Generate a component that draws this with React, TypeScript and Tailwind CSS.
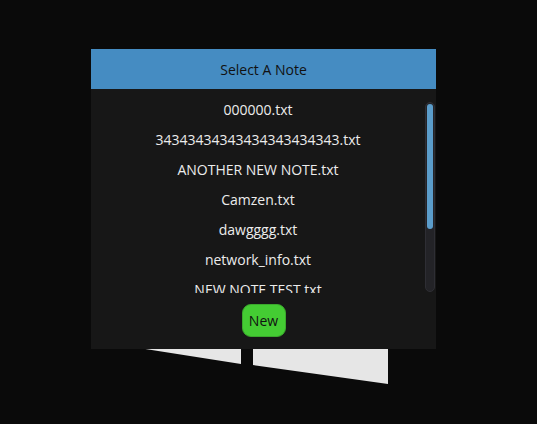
const notes = [
  "000000.txt",
  "34343434343434343434343.txt",
  "ANOTHER NEW NOTE.txt",
  "Camzen.txt",
  "dawgggg.txt",
  "network_info.txt",
  "NEW NOTE TEST.txt",
];

export default function App() {
  return (
    <div
      className="relative h-[424px] w-[537px] overflow-hidden bg-[#0a0a0a]"
      style={{ fontFamily: '"Open Sans", "Noto Sans", sans-serif' }}
    >
      {/* shapes behind the dialog */}
      <svg className="absolute left-0 top-0" width="537" height="424">
        <polygon points="139,348 241,348 241,364" fill="#e6e6e6" />
        <polygon points="253,348 388,348 388,384 253,365" fill="#e6e6e6" />
      </svg>

      <div className="absolute left-[91px] top-[49px] flex h-[300px] w-[345px] flex-col bg-[#171717]">
        {/* Header */}
        <div className="flex h-[40px] items-center justify-center bg-[#458cc2] text-[14px] text-[#111]">
          Select A Note
        </div>

        {/* List + scrollbar */}
        <div className="flex h-[204px] overflow-hidden">
          <div className="flex-1 pt-[5px]">
            {notes.map((n) => (
              <div
                key={n}
                className="flex h-[30px] items-center justify-center text-[14px] text-[#ececec]"
              >
                {n}
              </div>
            ))}
          </div>
          <div className="mr-[1px] mt-[13px] h-[190px] w-[10px] rounded-[5px] border border-[#2e2e34] bg-[#232327] p-[1px]">
            <div className="h-[125px] w-full rounded-[4px] bg-[#5b9dcb]" />
          </div>
        </div>

        {/* Footer */}
        <div className="flex flex-1 items-start justify-center pt-[11px]">
          <button className="flex h-[33px] w-[44px] items-center justify-center rounded-[9px] border border-[#3aa82c] bg-[#44cc33] text-[14px] text-[#111]">
            New
          </button>
        </div>
      </div>
    </div>
  );
}
